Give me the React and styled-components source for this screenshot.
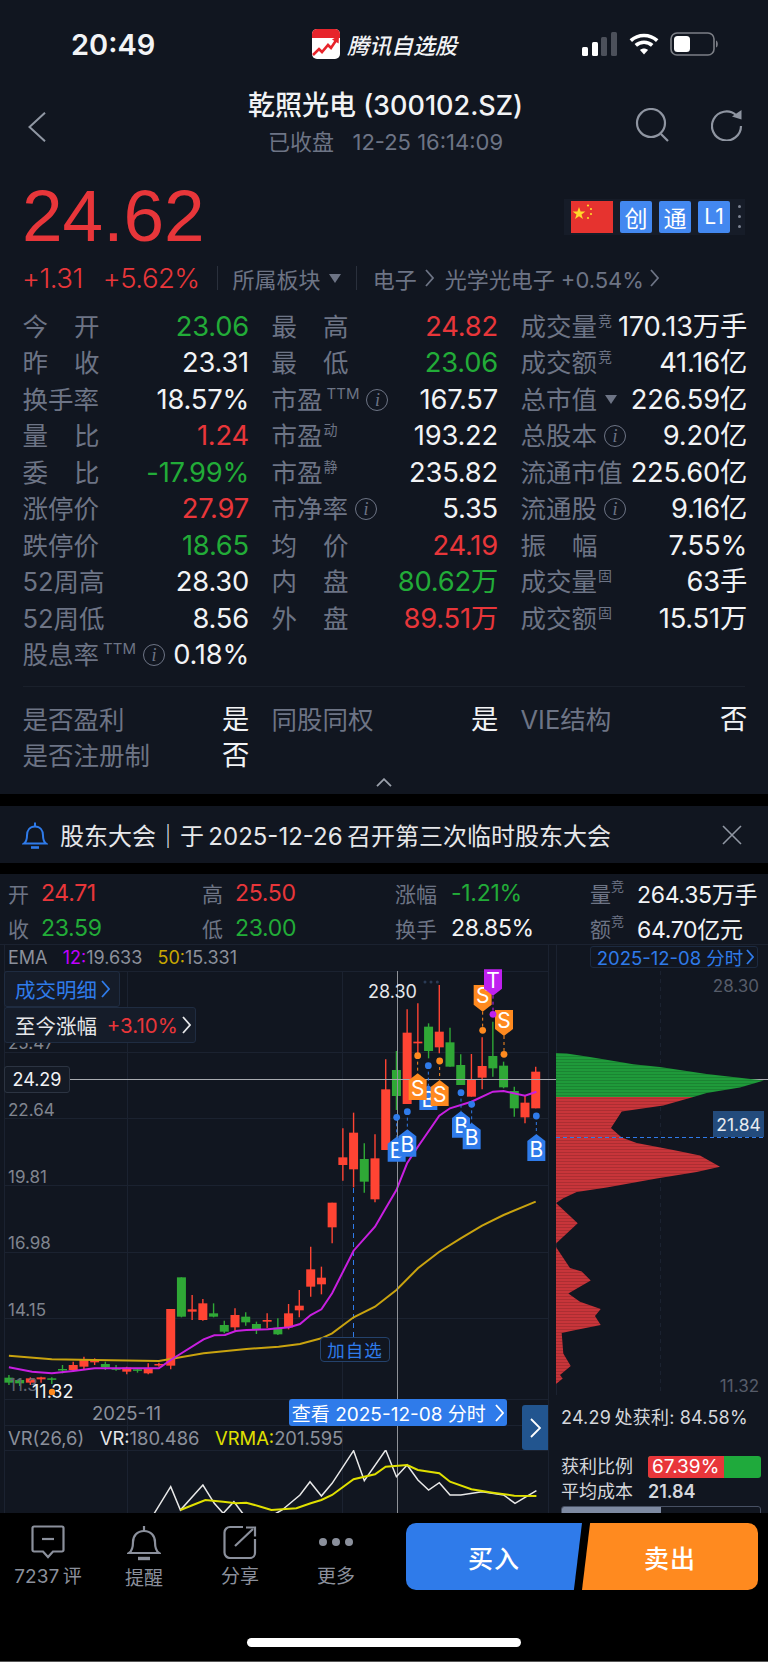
import React from "react";
import styled, { createGlobalStyle } from "styled-components";

const FONT = `Inter, "Noto Sans CJK SC", "Liberation Sans", sans-serif`;
const RED = "#e8363a";
const GREEN = "#22ac38";
const LABEL = "#6d7485";
const PANEL = "#111620";
const BLUE = "#2f7bea";
const ORANGE = "#ff8a1f";

const colorOf = (c) => ({ r: RED, g: GREEN, w: "#f2f3f5" }[c] || "#f2f3f5");

const Global = createGlobalStyle`
  html, body { margin: 0; padding: 0; background: #000; }
  body { font-family: ${FONT}; }
  * { box-sizing: border-box; }
`;

const Page = styled.div`
  width: 768px; height: 1662px; overflow: hidden; background: #000;
  display: flex; flex-direction: column; color: #f2f3f5;
`;
const TopPanel = styled.section`
  height: 794px; background: ${PANEL}; flex: none;
`;
const StatusBar = styled.div`
  height: 88px; padding: 0 50px; display: grid;
  grid-template-columns: 1fr auto 1fr; align-items: center;
`;
const Clock = styled.div`font-size: 29px; font-weight: 600; padding-left: 21px;`;
const Brand = styled.div`
  display: flex; align-items: center; gap: 6px; font-size: 22px; font-weight: 500;
  font-style: italic;
`;
const StatusIcons = styled.div`display: flex; justify-content: flex-end; align-items: center; gap: 11px;`;
const TopBar = styled.header`
  height: 77px; padding: 0 25px 0 28px; display: grid; grid-template-columns: 110px 1fr 110px; align-items: center;
`;
const TitleStack = styled.div`
  display: flex; flex-direction: column; align-items: center; gap: 7px; margin-top: -8px;
`;
const Title = styled.div`font-size: 27px; font-weight: 500; line-height: 32px; white-space: nowrap;`;
const Sub = styled.div`font-size: 22px; color: ${LABEL}; line-height: 26px; white-space: pre;`;
const TopActions = styled.div`display: flex; justify-content: flex-end; gap: 40px; align-items: center; margin-top: -3px;`;
const PriceRow = styled.div`
  height: 95px; padding: 0 23px; display: flex; justify-content: space-between; align-items: center;
`;
const Price = styled.div`
  font-size: 73px; font-weight: 300; color: ${RED}; line-height: 1; letter-spacing: 0;
  font-family: "Liberation Sans", sans-serif; margin-top: 6px; margin-left: -1px;
`;
const TagBar = styled.div`
  display: flex; align-items: center; gap: 7px; background: #161c28; height: 36px; padding: 0 4px 0 7px;
  margin-top: 8px;
`;
const Badge = styled.div`
  width: 32px; height: 32px; background: #4388f0; border-radius: 2px; color: #fff; font-size: ${(p) => p.$s || 23}px;
  display: flex; align-items: center; justify-content: center;
`;
const Kebab = styled.div`
  width: 3px; display: flex; flex-direction: column; gap: 7px; margin-left: 1px;
  i { width: 3px; height: 3px; border-radius: 50%; background: #7b8290; display: block; }
`;
const ChangeRow = styled.div`
  height: 36px; padding-left: 22px; display: flex; align-items: center; white-space: pre;
  font-size: 22px; color: ${LABEL};
`;
const Delta = styled.span`color: ${RED}; font-size: 27.5px; font-weight: 300; margin-right: ${(p) => p.$mr}px; letter-spacing: -0.5px;`;
const VDivider = styled.span`width: 1px; height: 24px; background: #2a303c; margin: 0 ${(p) => p.$r}px 0 ${(p) => p.$l}px;`;
const Caret = styled.span`
  width: 0; height: 0; border-left: 6.5px solid transparent; border-right: 6.5px solid transparent;
  border-top: 9px solid ${LABEL}; display: inline-block; margin: 0 ${(p) => p.$r || 0}px 0 ${(p) => p.$l || 0}px;
`;
const NavChev = styled.span`display: inline-flex; margin: 0 ${(p) => p.$r}px 0 ${(p) => p.$l}px;`;
const StatGrid = styled.div`
  margin-top: ${(p) => p.$mt}px; padding: 0 23px; display: grid; grid-template-columns: repeat(3, 225px); column-gap: 24px;
  grid-auto-rows: 36.5px;
`;
const Cell = styled.div`display: flex; justify-content: space-between; align-items: center; white-space: nowrap;`;
const Label = styled.div`
  display: flex; align-items: center; font-size: 25.5px; color: ${LABEL}; line-height: 30px;
  width: ${(p) => (p.$spread ? "77px" : "auto")};
  justify-content: ${(p) => (p.$spread ? "space-between" : "flex-start")};
  margin-left: -0.5px;
`;
const Sup = styled.span`
  font-size: ${(p) => p.$s || 14}px; align-self: flex-start; line-height: 16px; margin: 1px 0 0 ${(p) => p.$l || 1}px; color: ${LABEL};
`;
const InfoDot = styled.span`
  width: 22px; height: 22px; border: 1.5px solid ${LABEL}; border-radius: 50%; display: inline-flex;
  align-items: center; justify-content: center; font-family: "Liberation Serif", serif; font-style: italic;
  font-size: 18px; margin-left: ${(p) => p.$l || 7}px;
`;
const Value = styled.div`
  font-size: 27.3px; font-weight: 400; color: ${(p) => colorOf(p.$c)}; letter-spacing: -0.2px; line-height: 30px; margin-right: -1px;
`;
const Rule = styled.div`height: 1px; background: #1a202b; margin: 13px 23px 14px;`;
const Collapse = styled.div`display: flex; justify-content: center; margin-top: 4px;`;
const Gap = styled.div`height: ${(p) => p.$h}px; flex: none; background: #000;`;
const Notice = styled.div`
  height: 57px; flex: none; background: ${PANEL}; padding: 0 26px 0 22px; display: flex; align-items: center; gap: 12px;
  font-size: 24px; color: #e6e7ea;
`;
const NoticeText = styled.div`flex: 1; white-space: pre;`;
const ChartPanel = styled.section`height: 639px; flex: none; background: ${PANEL}; display: flex; flex-direction: column; overflow: hidden;`;
const Ohlc = styled.div`
  height: 70px; padding: 1px 0 0 8px; display: grid; grid-template-columns: 194px 193px 195px 1fr; grid-auto-rows: 35px;
  align-items: center; font-size: 23px;
`;
const OhlcCell = styled.div`display: flex; align-items: center; white-space: nowrap;`;
const OhlcLabel = styled.span`color: ${LABEL}; width: ${(p) => p.$w}px; display: flex; flex: none; font-size: 21px;`;
const OhlcSup = styled.span`font-size: 13px; line-height: 14px; align-self: flex-start; margin-top: 1px;`;
const OhlcValue = styled.span`color: ${(p) => colorOf(p.$c)}; letter-spacing: -0.3px;`;
const ChartBody = styled.div`flex: 1; display: grid; grid-template-columns: 549px 219px; min-height: 0;`;
const KlineCol = styled.div`position: relative; height: 569px; border-top: 1px solid #1b2230;`;
const PlotSvg = styled.svg`position: absolute; left: 0; top: 0; overflow: visible;`;
const EmaLine = styled.div`
  position: absolute; left: 8px; top: 1px; font-size: 18px; color: #8b909b; white-space: pre; line-height: 24px;
`;
const Tone = styled.span`color: ${(p) => p.$c};`;
const FloatBtn = styled.div`
  position: absolute; left: 4px; top: ${(p) => p.$top}px; width: ${(p) => p.$w}px; height: 36px;
  background: #151c29; border: 1px solid #1f2c41; border-radius: 3px; padding-left: 10px; display: flex; align-items: center;
  gap: 4px; font-size: 20.5px; white-space: pre; color: ${(p) => p.$c};
`;
const AxisLabel = styled.div`
  position: absolute; left: 8px; top: ${(p) => p.$y - 10 - 945}px; line-height: 20px; font-size: 17px; color: #80858f;
`;
const PriceTag = styled.div`
  position: absolute; left: 4px; top: 121px; width: 66px; height: 27px; background: #141a25; border: 1px solid #2c3442;
  border-radius: 3px; display: flex; align-items: center; justify-content: center; font-size: 18px; font-weight: 400;
`;
const WatchBtn = styled.div`
  position: absolute; left: 320px; top: 392px; width: 70px; height: 25px; border: 1px solid #24426c; border-radius: 4px;
  color: ${BLUE}; font-size: 17.5px; letter-spacing: 1px; display: flex; align-items: center; justify-content: center; background: ${PANEL};
`;
const MonthLabel = styled.div`
  position: absolute; left: 92px; top: 456px; font-size: 18.5px; color: #8b909b; line-height: 24px;
`;
const MinuteBtn = styled.div`
  position: absolute; left: 289px; top: 454px; width: 218px; height: 27px; background: ${BLUE}; border-radius: 3px; color: #fff;
  font-size: 19px; display: flex; align-items: center; justify-content: center; gap: 4px; white-space: pre;
`;
const SideTab = styled.div`
  position: absolute; left: 522px; top: 460px; width: 26px; height: 45px; background: #22558f; border-radius: 3px 0 0 3px;
  display: flex; align-items: center; justify-content: center;
`;
const VrLine = styled.div`
  position: absolute; left: 8px; top: 481px; font-size: 18.4px; color: #8b909b; white-space: pre; line-height: 24px;
`;
const SideCol = styled.div`position: relative; height: 569px; border-top: 1px solid #1b2230;`;
const DatePill = styled.div`
  position: absolute; left: 41px; top: 1px; width: 168px; height: 22px; border: 1px solid #1c2a40; border-radius: 3px; color: ${BLUE};
  font-size: 18.5px; padding-left: 3px; display: flex; align-items: center; justify-content: center; gap: 3px; white-space: pre;
`;
const SideAxis = styled.div`
  position: absolute; right: 9px; top: ${(p) => p.$top}px; font-size: 17px; color: #565c69; line-height: 20px;
`;
const CostTag = styled.div`
  position: absolute; left: 164px; top: 166px; width: 51px; height: 26px; background: #234b7c; color: #e8ebf0; font-size: 17.5px;
  display: flex; align-items: center; justify-content: center;
`;
const SideInfo = styled.div`
  position: absolute; left: 12px; right: 7px; top: 461px; font-size: 18px; color: #d5d7dc; line-height: 24px;
`;
const ProfitLine = styled.div`white-space: pre; margin-bottom: 24px; letter-spacing: 0.2px;`;
const InfoRow = styled.div`display: flex; align-items: center; height: 25px; white-space: pre;`;
const InfoKey = styled.span`width: 87px; flex: none;`;
const Ratio = styled.div`
  flex: 1; height: 22px; background: #1faa3c; border-radius: 3px; overflow: hidden; display: flex;
`;
const RatioFill = styled.div`
  height: 100%; background: ${RED}; color: #fff; font-size: 19px; padding-left: 4px; display: flex; align-items: center;
`;
const BoldNum = styled.span`font-weight: 600; font-size: 18px;`;
const CostTrack = styled.div`
  margin-top: 2px; height: 12px; border: 1px solid #475063; border-radius: 3px 3px 0 0; overflow: hidden;
`;
const CostFill = styled.div`height: 100%; background: #7e8aa1;`;
const BottomBar = styled.footer`
  flex: 1; background: #000; position: relative; padding: 10px 10px 0 0; display: grid;
  grid-template-columns: 96px 96px 96px 96px 1fr; align-content: start; border-bottom: 1px solid #555;
`;
const Tool = styled.div`
  display: flex; flex-direction: column; align-items: center; color: #8b909c; font-size: 19px; line-height: 24px; white-space: pre;
  svg { margin-bottom: 6px; margin-top: 2px; }
`;
const TradePair = styled.div`display: flex; margin-left: 22px;`;
const Trade = styled.div`
  height: 67px; color: #fff; font-size: 25px; font-weight: 500; display: flex; align-items: center; justify-content: center; letter-spacing: 1px;
`;
const Buy = styled(Trade)`
  width: 176px; background: ${BLUE}; border-radius: 10px 0 0 10px; clip-path: polygon(0 0, 100% 0, 95.4% 100%, 0 100%);
`;
const Sell = styled(Trade)`
  width: 176px; background: ${ORANGE}; border-radius: 0 10px 10px 0; clip-path: polygon(4.6% 0, 100% 0, 100% 100%, 0 100%);
`;
const HomeBar = styled.div`
  position: absolute; left: 247px; top: 125px; width: 274px; height: 9px; border-radius: 5px; background: #fff;
`;

/* chart data: coordinates read off the reference, in page pixels */
const z4 = (x, y) => [x / 2.8, 950 + y / 3];
const z5 = (x, y) => [x / 2.8, 1200 + y / 3];
const pts = (list, f) => list.map(([x, y]) => f(x, y).map((n) => n.toFixed(1)).join(",")).join(" ");

const C5 = [
  [25, "g", 525, 555, 533, 548], [55, "g", 535, 558, 540, 550], [85, "r", 532, 555, 535, 548], [115, "r", 530, 548, 532, 538],
  [145, "g", 532, 552, 535, 538], [175, "g", 495, 520, 507, 511], [205, "r", 485, 515, 495, 510], [235, "r", 470, 510, 480, 500],
  [265, "r", 475, 495, 480, 487], [295, "g", 485, 510, 492, 502], [325, "g", 495, 512, 505, 508], [355, "r", 500, 523, 503, 515],
  [385, "g", 505, 518, 508, 510], [415, "r", 490, 523, 505, 520], [445, "r", 488, 500, 492, 496], [478, "r", 327, 508, 327, 497],
  [508, "g", 232, 352, 232, 350], [538, "r", 285, 360, 328, 335], [568, "r", 297, 362, 310, 360], [598, "g", 310, 352, 340, 350],
  [628, "g", 362, 400, 375, 395], [658, "r", 325, 392, 345, 382], [688, "g", 337, 377, 350, 367], [718, "g", 365, 402, 372, 388],
  [748, "r", 340, 385, 360, 365], [778, "g", 355, 405, 383, 403], [808, "r", 312, 388, 340, 382], [838, "r", 270, 352, 317, 331],
  [870, "r", 140, 290, 208, 260], [900, "r", 200, 283, 233, 253], [930, "r", 8, 130, 8, 82],
];
const C4 = [
  [960, "r", 535, 692, 622, 645], [990, "r", 488, 712, 548, 658], [1020, "g", 580, 728, 627, 695], [1050, "r", 553, 757, 625, 748],
  [1080, "r", 328, 600, 418, 600], [1110, "g", 303, 480, 360, 438], [1140, "r", 178, 462, 248, 462], [1170, "r", 160, 315, 275, 280],
  [1200, "g", 220, 325, 230, 303], [1230, "r", 105, 310, 245, 292], [1260, "g", 233, 350, 277, 350], [1290, "g", 313, 405, 345, 405],
  [1320, "r", 312, 440, 390, 440], [1350, "r", 262, 418, 348, 383], [1380, "g", 215, 380, 318, 355], [1410, "g", 335, 415, 347, 412],
  [1440, "g", 410, 500, 423, 475], [1470, "r", 435, 520, 458, 502], [1500, "r", 350, 475, 365, 475],
];
const candles = [
  ...C5.map(([x, c, a, b, d, e]) => ({ x: x / 2.8, c, a: 1200 + a / 3, b: 1200 + b / 3, d: 1200 + d / 3, e: 1200 + e / 3 })),
  ...C4.map(([x, c, a, b, d, e]) => ({ x: x / 2.8, c, a: 950 + a / 3, b: 950 + b / 3, d: 950 + d / 3, e: 950 + e / 3 })),
];
const emaA =
  pts([[25, 502], [90, 515], [145, 520], [205, 513], [265, 505], [355, 505], [445, 505], [478, 480], [570, 418], [600, 406], [630, 405], [660, 393], [690, 390], [750, 388], [810, 382], [840, 372], [870, 345], [900, 328], [930, 280], [990, 152], [1050, 80]], z5) +
  " " +
  pts([[1080, 775], [1110, 720], [1140, 640], [1170, 590], [1230, 497], [1260, 475], [1320, 455], [1380, 425], [1410, 423], [1470, 437], [1502, 425]], z4);
const emaB = pts([[25, 467], [145, 478], [265, 480], [445, 483], [570, 460], [690, 447], [780, 440], [840, 432], [900, 415], [930, 400], [990, 352], [1050, 320], [1110, 270], [1170, 205], [1230, 155], [1290, 115], [1350, 77], [1410, 45], [1500, 5]], z5);
const vrWhite = pts([[432, 940], [478, 860], [505, 930], [568, 855], [600, 910], [625, 940], [655, 905], [690, 955], [730, 965], [790, 930], [840, 885], [868, 845], [900, 888], [930, 850], [990, 752], [1020, 842], [1080, 750], [1110, 830], [1140, 795], [1170, 840], [1200, 870], [1230, 848], [1260, 885], [1290, 885], [1350, 875], [1410, 885], [1442, 910], [1502, 872]], z5);
const vrYellow = pts([[505, 930], [540, 915], [575, 900], [625, 905], [660, 910], [690, 908], [730, 920], [760, 930], [830, 925], [870, 910], [900, 900], [930, 885], [990, 838], [1050, 823], [1080, 800], [1140, 795], [1170, 810], [1230, 820], [1260, 845], [1320, 868], [1380, 878], [1440, 887], [1502, 888]], z5);

const signals = [
  { l: "B", x: 170, t: 530, b: 605, dot: 472, c: BLUE, up: true },
  { l: "B", x: 202, t: 508, b: 590, dot: 455, c: BLUE, up: true },
  { l: "B", x: 265, t: 375, b: 450, dot: 317, c: BLUE, up: true },
  { l: "S", x: 233, t: 340, b: 420, dot: 287, c: ORANGE, up: true },
  { l: "S", x: 299, t: 360, b: 438, dot: 303, c: ORANGE, up: true },
  { l: "B", x: 363, t: 453, b: 533, dot: 398, c: BLUE, up: true },
  { l: "B", x: 395, t: 488, b: 568, dot: 433, c: BLUE, up: true },
  { l: "B", x: 589, t: 522, b: 603, dot: 468, c: BLUE, up: true },
  { l: "S", x: 428, t: 75, b: 155, dot: 211, c: ORANGE, up: false },
  { l: "S", x: 492, t: 150, b: 228, dot: 283, c: ORANGE, up: false },
  { l: "T", x: 459, t: 28, b: 107, dot: 163, c: "#c020f0", up: false },
];

const Signal = ({ s }) => {
  const cx = 340 + s.x / 3;
  const t = 960 + s.t / 3;
  const b = 960 + s.b / 3;
  const dy = 960 + s.dot / 3;
  const w = 9;
  const poly = s.up
    ? `${cx},${t} ${cx + w},${t + 7} ${cx + w},${b} ${cx - w},${b} ${cx - w},${t + 7}`
    : `${cx - w},${t} ${cx + w},${t} ${cx + w},${b - 7} ${cx},${b} ${cx - w},${b - 7}`;
  return (
    <g>
      <line x1={cx} x2={cx} y1={s.up ? dy : b} y2={s.up ? t : dy} stroke={s.c} strokeWidth="1" strokeDasharray="3 3" />
      <circle cx={cx} cy={dy} r="3.4" fill={s.c} />
      <polygon points={poly} fill={s.c} />
      <text x={cx} y={(t + b) / 2 + (s.up ? 9 : 5)} textAnchor="middle" fill="#fff" fontSize="21" fontFamily="Inter, sans-serif" fontWeight="400">{s.l}</text>
    </g>
  );
};

const KlinePlot = () => (
  <PlotSvg width="768" height="568" viewBox="0 945 768 568">
    <g stroke="#1b2230" strokeWidth="1">
      {[971, 1052, 1118, 1185, 1252, 1318, 1399, 1425, 1450].map((y) => (
        <line key={y} x1="4" x2="548" y1={y + 0.5} y2={y + 0.5} />
      ))}
      {[127, 342].map((x) => <line key={x} x1={x + 0.5} x2={x + 0.5} y1="971" y2="1513" />)}
      <line x1="4.5" x2="4.5" y1="945" y2="1513" />
      <line x1="548.5" x2="548.5" y1="945" y2="1513" />
    </g>
    <line x1="353.5" x2="353.5" y1="1188" y2="1337" stroke={BLUE} strokeDasharray="5 4" />
    {candles.map((k, i) => {
      const col = k.c === "r" ? "#ff4433" : "#2fa836";
      return (
        <g key={i}>
          <line x1={k.x} x2={k.x} y1={k.a} y2={k.b} stroke={col} strokeWidth="1.4" />
          <rect x={k.x - 4.5} y={k.d} width="9" height={Math.max(k.e - k.d, 1.5)} fill={col} />
        </g>
      );
    })}
    <polyline points={emaB} fill="none" stroke="#c9a30f" strokeWidth="2" />
    <polyline points={emaA} fill="none" stroke="#c81fe0" strokeWidth="2" />
    <line x1="397.5" x2="397.5" y1="971" y2="1513" stroke="#8f9298" strokeWidth="1" />
    <line x1="70" x2="768" y1="1079.5" y2="1079.5" stroke="#a8abb0" strokeWidth="1" />
    {[255, 273, 292].map((x) => <circle key={x} cx={340 + x / 3} cy={982} r="1.5" fill="#2a3b55" />)}
    {signals.map((s, i) => <Signal key={i} s={s} />)}
    <text x="368" y="998" fill="#e6e7ea" fontSize="18" fontFamily="Inter, sans-serif">28.30</text>
    <text x="9" y="1391" fill="#5f6470" fontSize="17" fontFamily="Inter, sans-serif">11.3</text>
    <text x="32" y="1398" fill="#f2f3f5" fontSize="18" fontFamily="Inter, sans-serif">11.32</text>
    <circle cx="52" cy="1392" r="3.2" fill={ORANGE} />
    <g clipPath="url(#vrClip)">
      <polyline points={vrWhite} fill="none" stroke="#e9e9e9" strokeWidth="1.5" />
      <polyline points={vrYellow} fill="none" stroke="#e0e000" strokeWidth="2" />
    </g>
    <defs>
      <clipPath id="vrClip"><rect x="0" y="1450" width="549" height="63" /></clipPath>
    </defs>
  </PlotSvg>
);

const p6 = (list) => list.map(([x, y]) => `${(x / 3 - 9).toFixed(1)},${(y / 2.8 + 5).toFixed(1)}`).join(" ");
const greenPts = [[48, 288], [80, 290], [150, 300], [280, 320], [360, 328], [500, 347], [672, 365], [600, 385], [500, 400], [460, 412], [48, 412]];
const redA = [[48, 412], [460, 412], [370, 435], [245, 452], [213, 498], [245, 525], [290, 540], [400, 560], [480, 575], [540, 607], [470, 622], [350, 640], [200, 665], [110, 678], [70, 695], [48, 708]];
const redB = [[48, 708], [113, 765], [48, 822]];
const redC = [[48, 832], [90, 890], [125, 900], [152, 925], [85, 962], [120, 985], [182, 1005], [165, 1025], [182, 1050], [100, 1065], [65, 1072], [70, 1130], [92, 1165], [60, 1190], [68, 1200], [48, 1215]];
const ProfileSvg = styled.svg`position: absolute; left: 0; top: 0;`;
const Profile = () => (
  <ProfileSvg width="219" height="450">
    <defs>
      <pattern id="stripe" width="4" height="3" patternUnits="userSpaceOnUse">
        <rect width="4" height="1" fill="#000" opacity="0.14" />
      </pattern>
      <clipPath id="profileClip">
        {[greenPts, redA, redB, redC].map((list, i) => <polygon key={i} points={p6(list)} />)}
      </clipPath>
    </defs>
    <line x1="7.5" x2="7.5" y1="0" y2="450" stroke="#1b2230" />
    <line x1="111.5" x2="111.5" y1="26" y2="450" stroke="#1b2230" strokeDasharray="4 4" />
    <polygon fill="#1f9a3a" points={p6(greenPts)} />
    <polygon fill="#c8353a" points={p6(redA)} />
    <polygon fill="#c8353a" points={p6(redB)} />
    <polygon fill="#c8353a" points={p6(redC)} />
    <rect x="7" y="100" width="210" height="340" fill="url(#stripe)" clipPath="url(#profileClip)" />
    <line x1="7" x2="215" y1="192.5" y2="192.5" stroke={BLUE} strokeDasharray="4 3" />
  </ProfileSvg>
);

/* icons */
const Signal4 = () => (
  <svg width="36" height="24" viewBox="0 0 36 24">
    <rect x="0" y="15" width="6" height="9" rx="1.5" fill="#fff" />
    <rect x="10" y="10" width="6" height="14" rx="1.5" fill="#fff" />
    <rect x="19" y="5" width="6" height="19" rx="1.5" fill="#4c505a" />
    <rect x="29" y="0" width="6" height="24" rx="1.5" fill="#4c505a" />
  </svg>
);
const Wifi = () => (
  <svg width="30" height="22" viewBox="0 0 30 22" fill="none" stroke="#fff" strokeWidth="3.6">
    <path d="M1.8 7.6C9.2 .8 20.8 .8 28.2 7.6" />
    <path d="M6.8 12.4c4.6-4.2 11.8-4.2 16.4 0" />
    <path d="M15 21.5l-4-4.6c2.2-2 5.8-2 8 0z" fill="#fff" stroke="none" />
  </svg>
);
const Battery = () => (
  <svg width="48" height="24" viewBox="0 0 48 24">
    <rect x="1" y="1" width="43" height="22" rx="6" fill="none" stroke="#7c7f86" strokeWidth="1.6" />
    <rect x="4" y="4" width="16" height="16" rx="3.5" fill="#fff" />
    <path d="M46 8.5c1.4.5 1.8 2 1.8 3.5s-.4 3-1.8 3.5z" fill="#7c7f86" />
  </svg>
);
const Logo = () => (
  <svg width="30" height="30" viewBox="0 0 30 30">
    <rect x="1" y="0" width="28" height="30" rx="5" fill="#fff" />
    <path d="M1 9V5a5 5 0 0 1 5-5h18a5 5 0 0 1 5 5v4z" fill="#e7242b" />
    <path d="M2 26l6-6 3 3 6-7 3 3 6-9" fill="none" stroke="#e7242b" strokeWidth="2.6" />
    <path d="M28 6.5l-.4 8-6.6-4z" fill="#e7242b" />
  </svg>
);
const Back = () => (
  <svg width="18" height="30" viewBox="0 0 18 30" fill="none" stroke="#9097a3" strokeWidth="2"><path d="M17 .7L1.5 15 17 29.3" /></svg>
);
const Search = () => (
  <svg width="36" height="34" viewBox="0 0 36 34" fill="none" stroke="#8f95a1" strokeWidth="2.2">
    <circle cx="16" cy="15" r="14" /><path d="M26 26l7 7" />
  </svg>
);
const Refresh = () => (
  <svg width="32" height="32" viewBox="0 0 32 32" fill="none">
    <path d="M25 6A14.5 14.5 0 1 0 30 17" stroke="#8f95a1" strokeWidth="2.2" />
    <path d="M21 7.5L30.5 1v9.5z" fill="#8f95a1" />
  </svg>
);
const Flag = () => (
  <svg width="42" height="32" viewBox="0 0 42 32">
    <rect width="42" height="32" fill="#e6332f" />
    <path d="M8 6l1.6 4.6h4.8l-3.9 2.8 1.5 4.6-4-2.8-4 2.8 1.5-4.6-3.9-2.8h4.8z" fill="#ffd92a" />
    <g fill="#ffd92a">
      <circle cx="17" cy="4.5" r="1.1" /><circle cx="20" cy="8" r="1.1" /><circle cx="20" cy="13" r="1.1" /><circle cx="17" cy="17" r="1.1" />
    </g>
  </svg>
);
const Chev = ({ c = LABEL, w = 9, h = 18, s = 1.8 }) => (
  <svg width={w} height={h} viewBox={`0 0 ${w} ${h}`} fill="none" stroke={c} strokeWidth={s}><path d={`M1 1L${w - 1} ${h / 2} 1 ${h - 1}`} /></svg>
);
const Up = () => (
  <svg width="16" height="9" viewBox="0 0 16 9" fill="none" stroke="#9aa0ab" strokeWidth="1.8"><path d="M1 8.2L8 1.2l7 7" /></svg>
);
const BellBlue = () => (
  <svg width="26" height="28" viewBox="0 0 26 28" fill="none" stroke={BLUE} strokeWidth="2">
    <path d="M2 22.5c2.6-2 3-4.2 3-8 0-5 2.8-9 8-9s8 4 8 9c0 3.8.4 6 3 8z" />
    <path d="M13 5.5V1.5" /><path d="M9 26.5h8" strokeWidth="2.6" />
  </svg>
);
const Close = () => (
  <svg width="20" height="20" viewBox="0 0 20 20" fill="none" stroke="#9097a3" strokeWidth="1.6"><path d="M1 1l18 18M19 1L1 19" /></svg>
);
const CommentIcon = () => (
  <svg width="34" height="34" viewBox="0 0 34 34" fill="none" stroke="#8b909c" strokeWidth="2.2">
    <path d="M3 1.5h28a1.5 1.5 0 0 1 1.5 1.5v22a1.5 1.5 0 0 1-1.5 1.5h-9L17 32l-5-5.5H3A1.5 1.5 0 0 1 1.5 25V3A1.5 1.5 0 0 1 3 1.5z" />
    <path d="M11 14h12" />
  </svg>
);
const BellIcon = () => (
  <svg width="34" height="36" viewBox="0 0 34 36" fill="none" stroke="#8b909c" strokeWidth="2.2">
    <path d="M2 28c3-2 4-5 4-11 0-6 4-11 11-11s11 5 11 11c0 6 1 9 4 11z" />
    <path d="M17 6V1" /><path d="M11 33.5h12" strokeWidth="3.4" />
  </svg>
);
const ShareIcon = () => (
  <svg width="34" height="34" viewBox="0 0 34 34" fill="none" stroke="#8b909c" strokeWidth="2.2">
    <path d="M20 2H7a5.5 5.5 0 0 0-5.5 5.5v20A5.5 5.500 0 0 0 7 33h20a5 5 0 0 0 5-5V14" />
    <path d="M12 21L30 4" /><path d="M23 2.5h9v9" />
  </svg>
);
const DotsIcon = () => (
  <svg width="38" height="34" viewBox="0 0 38 34" fill="#8b909c">
    <circle cx="6" cy="17" r="4" /><circle cx="19" cy="17" r="4" /><circle cx="32" cy="17" r="4" />
  </svg>
);

/* stat rows */
const stats = [
  { l: "今开", s: 1, v: "23.06", c: "g" }, { l: "最高", s: 1, v: "24.82", c: "r" }, { l: "成交量", sup: "竞", v: "170.13万手" },
  { l: "昨收", s: 1, v: "23.31" }, { l: "最低", s: 1, v: "23.06", c: "g" }, { l: "成交额", sup: "竞", v: "41.16亿" },
  { l: "换手率", v: "18.57%" }, { l: "市盈", ttm: 1, i: 1, v: "167.57" }, { l: "总市值", caret: 1, v: "226.59亿" },
  { l: "量比", s: 1, v: "1.24", c: "r" }, { l: "市盈", sup: "动", v: "193.22" }, { l: "总股本", i: 1, v: "9.20亿" },
  { l: "委比", s: 1, v: "-17.99%", c: "g" }, { l: "市盈", sup: "静", v: "235.82" }, { l: "流通市值", v: "225.60亿" },
  { l: "涨停价", v: "27.97", c: "r" }, { l: "市净率", i: 1, v: "5.35" }, { l: "流通股", i: 1, v: "9.16亿" },
  { l: "跌停价", v: "18.65", c: "g" }, { l: "均价", s: 1, v: "24.19", c: "r" }, { l: "振幅", s: 1, v: "7.55%" },
  { l: "52周高", v: "28.30" }, { l: "内盘", s: 1, v: "80.62万", c: "g" }, { l: "成交量", sup: "固", v: "63手" },
  { l: "52周低", v: "8.56" }, { l: "外盘", s: 1, v: "89.51万", c: "r" }, { l: "成交额", sup: "固", v: "15.51万" },
  { l: "股息率", ttm: 1, i: 1, v: "0.18%" },
];
const flags = [
  ["是否盈利", "是"], ["同股同权", "是"], ["VIE结构", "否"], ["是否注册制", "否"],
];
const ohlc = [
  ["开", 33, "24.71", "r"], ["高", 33, "25.50", "r"], ["涨幅", 56, "-1.21%", "g"], ["量", 47, "264.35万手", "w", "竞"],
  ["收", 33, "23.59", "g"], ["低", 33, "23.00", "g"], ["换手", 56, "28.85%", "w"], ["额", 47, "64.70亿元", "w", "竞"],
];
const axis = [[1043, "25.47"], [1110, "22.64"], [1177, "19.81"], [1243, "16.98"], [1310, "14.15"]];

export default function App() {
  return (
    <Page>
      <Global />
      <TopPanel>
        <StatusBar>
          <Clock>20:49</Clock>
          <Brand><Logo />腾讯自选股</Brand>
          <StatusIcons><Signal4 /><Wifi /><Battery /></StatusIcons>
        </StatusBar>
        <TopBar>
          <Back />
          <TitleStack>
            <Title>乾照光电 (300102.SZ)</Title>
            <Sub>已收盘   12-25 16:14:09</Sub>
          </TitleStack>
          <TopActions><Search /><Refresh /></TopActions>
        </TopBar>
        <PriceRow>
          <Price>24.62</Price>
          <TagBar>
            <Flag />
            <Badge>创</Badge><Badge>通</Badge><Badge $s={21}>L1</Badge>
            <Kebab><i /><i /><i /></Kebab>
          </TagBar>
        </PriceRow>
        <ChangeRow>
          <Delta $mr={20}>+1.31</Delta>
          <Delta $mr={17}>+5.62%</Delta>
          <VDivider $l={0} $r={15} />所属板块<Caret $l={8} $r={15} />
          <VDivider $l={0} $r={16} />电子<NavChev $l={8} $r={11}><Chev /></NavChev>光学光电子 +0.54%<NavChev $l={6} $r={0}><Chev /></NavChev>
        </ChangeRow>
        <StatGrid $mt={12.25}>
          {stats.map((s, i) => (
            <Cell key={i}>
              <Label $spread={s.s}>
                {s.s ? [...s.l].map((ch) => <span key={ch}>{ch}</span>) : s.l}
                {s.sup && <Sup>{s.sup}</Sup>}
                {s.ttm && <Sup $s={15} $l={4}>TTM</Sup>}
                {s.caret && <Caret $l={8} />}
                {s.i && <InfoDot>i</InfoDot>}
              </Label>
              <Value $c={s.c}>{s.v}</Value>
            </Cell>
          ))}
        </StatGrid>
        <Rule />
        <StatGrid $mt={0}>
          {flags.map(([l, v]) => (
            <Cell key={l}><Label>{l}</Label><Value>{v}</Value></Cell>
          ))}
        </StatGrid>
        <Collapse><Up /></Collapse>
      </TopPanel>
      <Gap $h={12} />
      <Notice>
        <BellBlue />
        <NoticeText>股东大会｜于{"\u2009"}2025-12-26{"\u2009"}召开第三次临时股东大会</NoticeText>
        <Close />
      </Notice>
      <Gap $h={11} />
      <ChartPanel>
        <Ohlc>
          {ohlc.map(([l, w, v, c, sup]) => (
            <OhlcCell key={l}>
              <OhlcLabel $w={w}>{l}{sup && <OhlcSup>{sup}</OhlcSup>}</OhlcLabel>
              <OhlcValue $c={c}>{v}</OhlcValue>
            </OhlcCell>
          ))}
        </Ohlc>
        <ChartBody>
          <KlineCol>
            <KlinePlot />
            <EmaLine>EMA   <Tone $c="#c000ff">12:</Tone>19.633   <Tone $c="#c8a800">50:</Tone>15.331</EmaLine>
            {axis.map(([y, t]) => <AxisLabel key={t} $y={y}>{t}</AxisLabel>)}
            <FloatBtn $top={26} $w={116} $c={BLUE}>成交明细<Chev c={BLUE} /></FloatBtn>
            <FloatBtn $top={62} $w={192} $c="#e6e7ea">至今涨幅 <Tone $c={RED}>+3.10%</Tone><Chev c="#e6e7ea" /></FloatBtn>
            <PriceTag>24.29</PriceTag>
            <WatchBtn>加自选</WatchBtn>
            <MonthLabel>2025-11</MonthLabel>
            <MinuteBtn>查看 2025-12-08 分时 <Chev c="#fff" /></MinuteBtn>
            <SideTab><Chev c="#fff" w={11} h={20} /></SideTab>
            <VrLine>VR(26,6)   <Tone $c="#e6e7ea">VR:</Tone>180.486   <Tone $c="#e0e000">VRMA:</Tone>201.595</VrLine>
          </KlineCol>
          <SideCol>
            <Profile />
            <DatePill>2025-12-08 分时<Chev c={BLUE} w={8} h={16} /></DatePill>
            <SideAxis $top={31}>28.30</SideAxis>
            <CostTag>21.84</CostTag>
            <SideAxis $top={431}>11.32</SideAxis>
            <SideInfo>
              <ProfitLine>24.29{"\u2009"}处获利: 84.58%</ProfitLine>
              <InfoRow>
                <InfoKey>获利比例</InfoKey>
                <Ratio><RatioFill style={{ width: "67.39%" }}>67.39%</RatioFill></Ratio>
              </InfoRow>
              <InfoRow><InfoKey>平均成本</InfoKey><BoldNum>21.84</BoldNum></InfoRow>
              <CostTrack><CostFill style={{ width: "50%" }} /></CostTrack>
            </SideInfo>
          </SideCol>
        </ChartBody>
      </ChartPanel>
      <BottomBar>
        <Tool><CommentIcon />7237{"\u2009"}评</Tool>
        <Tool><BellIcon />提醒</Tool>
        <Tool><ShareIcon />分享</Tool>
        <Tool><DotsIcon />更多</Tool>
        <TradePair>
          <Buy>买入</Buy>
          <Sell>卖出</Sell>
        </TradePair>
        <HomeBar />
      </BottomBar>
    </Page>
  );
}
